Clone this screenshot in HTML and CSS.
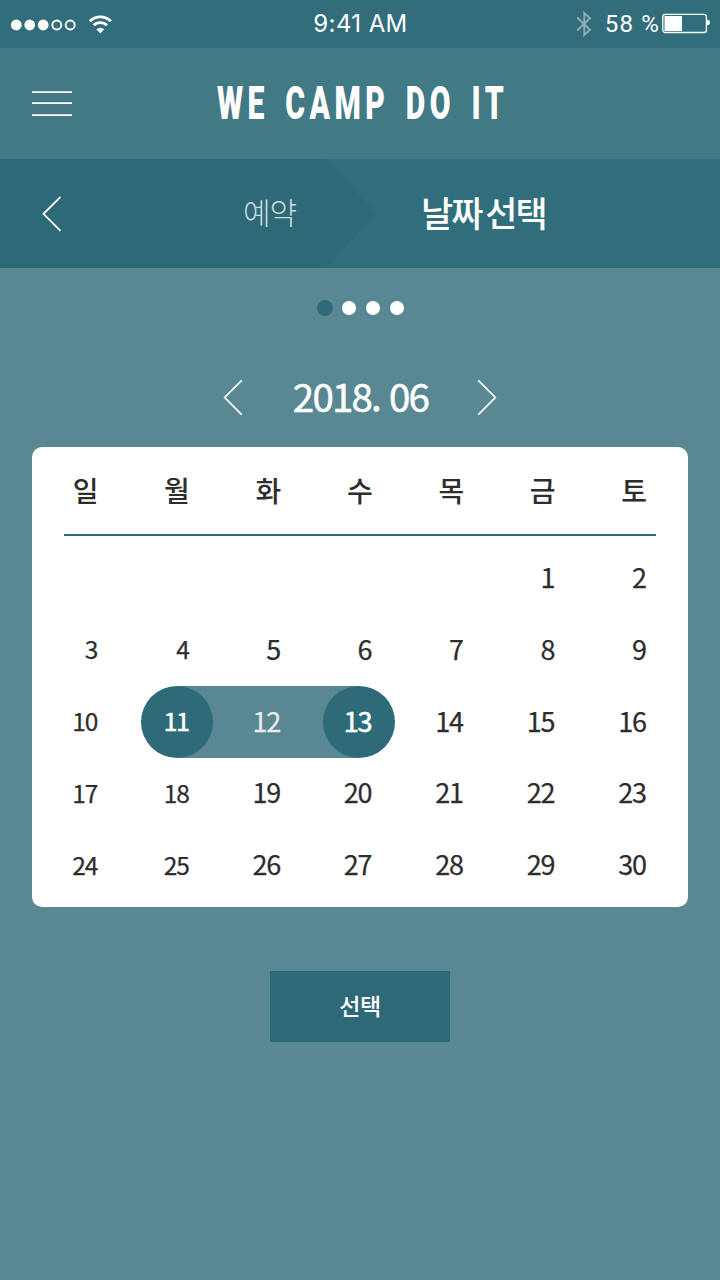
FILE: index.html
```
<!DOCTYPE html>
<html lang="ko">
<head>
<meta charset="utf-8">
<title>WE CAMP DO IT</title>
<link rel="stylesheet" href="styles.css">
</head>
<body>
<div class="status">
  <svg class="signal" width="114" height="48" viewBox="0 0 114 48">
    <g fill="#fff"><circle cx="16.3" cy="25" r="5.4"/><circle cx="29.7" cy="25" r="5.4"/><circle cx="43.2" cy="25" r="5.4"/></g>
    <g fill="none" stroke="#fff" stroke-width="1.9"><circle cx="56.8" cy="25" r="4.5"/><circle cx="70.2" cy="25" r="4.5"/></g>
    <g fill="none" stroke="#fff" stroke-width="2.9"><path d="M89.8 21.2a14.8 14.8 0 0 1 21 0"/><path d="M93.7 25.3a9.4 9.4 0 0 1 13.2 0"/></g>
    <path d="M96.4 29.3a5.6 5.6 0 0 1 7.8 0L100.3 33.4z" fill="#fff"/>
  </svg>
  <span class="time">9:41 AM</span>
  <div class="power">
    <svg width="18" height="48" viewBox="0 0 18 48"><path d="M1.2 17.5L14 29.8L8.3 35V13L14 18.2L1.2 30.5" fill="none" stroke="#8fb0b9" stroke-width="1.9"/></svg>
    <span class="percent">58 %</span>
    <svg width="50" height="48" viewBox="0 0 50 48"><rect x="2.8" y="14.3" width="43.6" height="18.2" rx="2.6" fill="none" stroke="#fff" stroke-width="1.3"/><path d="M4.5 16h17.5v15H4.5z" fill="#fff"/><path d="M47 19.5c4 .5 4 5.500 0 6z" fill="#fff"/></svg>
  </div>
</div>
<header class="header">
  <svg class="menu" width="40" height="26" viewBox="0 0 40 26"><path d="M0 1.100h40M0 12.100h40M0 24.100h40" stroke="#fff" stroke-width="1.800"/></svg>
  <h1 class="brand"><span>WE CAMP DO IT</span></h1>
</header>
<nav class="steps">
  <svg class="steps-bg" width="720" height="109" viewBox="0 0 720 109"><path d="M0 0H326L376 54L326 109H0z" fill="#2e6977"/></svg>
  <svg class="back" width="20" height="36" viewBox="0 0 20 36"><path d="M18.500 .800L1.500 17.800L18.500 34.800" fill="none" stroke="#fff" stroke-width="1.800"/></svg>
  <span class="prev-step">예약</span>
  <span class="this-step">날짜 선택</span>
</nav>
<main class="main">
  <div class="dots"><i class="on"></i><i></i><i></i><i></i></div>
  <div class="month">
    <svg width="20" height="36" viewBox="0 0 20 36"><path d="M18.700 .300L1.700 17.500L18.700 34.700" fill="none" stroke="#fff" stroke-width="1.700"/></svg>
    <span class="month-name">2018. 06</span>
    <svg width="20" height="36" viewBox="0 0 20 36"><path d="M1.300 .300L18.300 17.500L1.300 34.700" fill="none" stroke="#fff" stroke-width="1.700"/></svg>
  </div>
  <section class="card">
    <div class="week names"><b>일</b><b>월</b><b>화</b><b>수</b><b>목</b><b>금</b><b>토</b></div>
    <div class="days">
      <div class="week"><span></span><span></span><span></span><span></span><span></span><span>1</span><span>2</span></div>
      <div class="week"><span>3</span><span>4</span><span>5</span><span>6</span><span>7</span><span>8</span><span>9</span></div>
      <div class="week"><span>10</span><span class="first">11</span><span class="between">12</span><span class="last">13</span><span>14</span><span>15</span><span>16</span></div>
      <div class="week low"><span>17</span><span>18</span><span>19</span><span>20</span><span>21</span><span>22</span><span>23</span></div>
      <div class="week low"><span>24</span><span>25</span><span>26</span><span>27</span><span>28</span><span>29</span><span>30</span></div>
    </div>
  </section>
  <button class="select">선택</button>
</main>
</body>
</html>
```
FILE: styles.css
```
* { box-sizing: border-box; }
body {
  margin: 0;
  width: 720px;
  height: 1280px;
  overflow: hidden;
  background: #598893;
  color: #fff;
  font-family: "Noto Sans CJK KR", "Noto Sans", sans-serif;
}
svg { display: block; flex: none; }
.status {
  display: grid;
  grid-template-columns: 1fr auto 1fr;
  height: 48px;
  background: #316d7b;
  font: 24px/48px Inter, Roboto, sans-serif;
}
.time { padding-left: 1px; letter-spacing: 0.4px; white-space: nowrap; }
.power { display: flex; justify-content: flex-end; padding-right: 10px; }
.percent { margin-left: 11px; font-family: Roboto, sans-serif; letter-spacing: 1.2px; white-space: nowrap; }
.header {
  display: flex;
  align-items: center;
  height: 111px;
  padding: 0 32px;
  background: #417985;
}
.brand {
  flex: 1;
  margin: 0 35px 0 0;
  padding-bottom: 1px;
  font: 900 47px/60px Roboto, sans-serif;
  letter-spacing: 7px;
  word-spacing: 7px;
  text-align: center;
}
.brand span { display: inline-block; white-space: nowrap; margin: 0 -80px; transform: scaleX(0.64); }
.steps {
  position: relative;
  display: flex;
  align-items: center;
  height: 109px;
  padding-left: 42px;
  background: #316e7c;
}
.steps-bg { position: absolute; inset: 0; }
.back, .prev-step, .this-step { position: relative; }
.prev-step {
  width: 178px;
  margin-left: 181px;
  padding-bottom: 6px;
  color: #cbdade;
  font-size: 30px;
  font-weight: 200;
  line-height: 40px;
  letter-spacing: -1.2px;
}
.this-step {
  padding-bottom: 4px;
  font-size: 35px;
  font-weight: 500;
  line-height: 40px;
  letter-spacing: -2px;
  word-spacing: -4px;
  white-space: nowrap;
}
.main { display: flex; flex-direction: column; align-items: center; padding: 32px 32px 0; }
.dots { display: flex; align-items: center; gap: 10px; height: 16px; margin-left: 1px; }
.dots i { width: 14px; height: 14px; border-radius: 50%; background: #fff; }
.dots .on { width: 16px; height: 16px; margin-right: -1px; background: #2e6b79; }
.month {
  display: flex;
  align-items: center;
  justify-content: space-between;
  width: 274px;
  height: 36px;
  margin-top: 64px;
}
.month-name {
  padding-left: 1px;
  padding-bottom: 7px;
  font-size: 38.5px;
  line-height: 36px;
  letter-spacing: -1.8px;
  white-space: nowrap;
  -webkit-text-stroke: 0.5px #fff;
}
.card { width: 656px; height: 460px; margin-top: 31px; border-radius: 10px; background: #fff; color: #2d2d2d; }
.week { display: grid; grid-template-columns: repeat(7, 1fr); height: 72px; padding: 0 8px; }
.week > * { position: relative; display: block; padding-right: 33px; text-align: right; }
.names { height: 87px; }
.names b { font-size: 28px; font-weight: 500; line-height: 87px; }
.days {
  position: relative;
  z-index: 0;
  padding-top: 8px;
  background: linear-gradient(#2e6b79, #2e6b79) 32px 0 / 592px 2px no-repeat;
}
.days .week span {
  padding-right: 34.3px;
  font-size: 27px;
  line-height: 69px;
  letter-spacing: -1.2px;
  -webkit-text-stroke: 0.25px currentColor;
}
.days .week span:nth-child(-n+2) { font-size: 24.5px; line-height: 69px; }
.days .week.low span { line-height: 68px; }
.days .week.low span:nth-child(-n+2) { line-height: 70px; }
.days .week .first, .days .week .last { color: #fff; -webkit-text-stroke-width: 0.6px; }
.days .between { color: #ebebeb; }
.first::before, .last::before {
  content: "";
  position: absolute;
  z-index: -1;
  top: 0;
  left: 9.5px;
  width: 72px;
  height: 72px;
  border-radius: 50%;
  background: #2e6b79;
}
.last::before { left: 8.7px; }
.between::before {
  content: "";
  position: absolute;
  z-index: -2;
  top: 0;
  left: -46px;
  right: -46px;
  height: 72px;
  background: #598893;
}
.select {
  width: 180px;
  height: 71px;
  margin-top: 64px;
  padding: 0 0 2px;
  border: 0;
  background: #2e6977;
  color: #fff;
  font: 500 23px/69px "Noto Sans CJK KR", sans-serif;
  letter-spacing: -0.3px;
}
```
